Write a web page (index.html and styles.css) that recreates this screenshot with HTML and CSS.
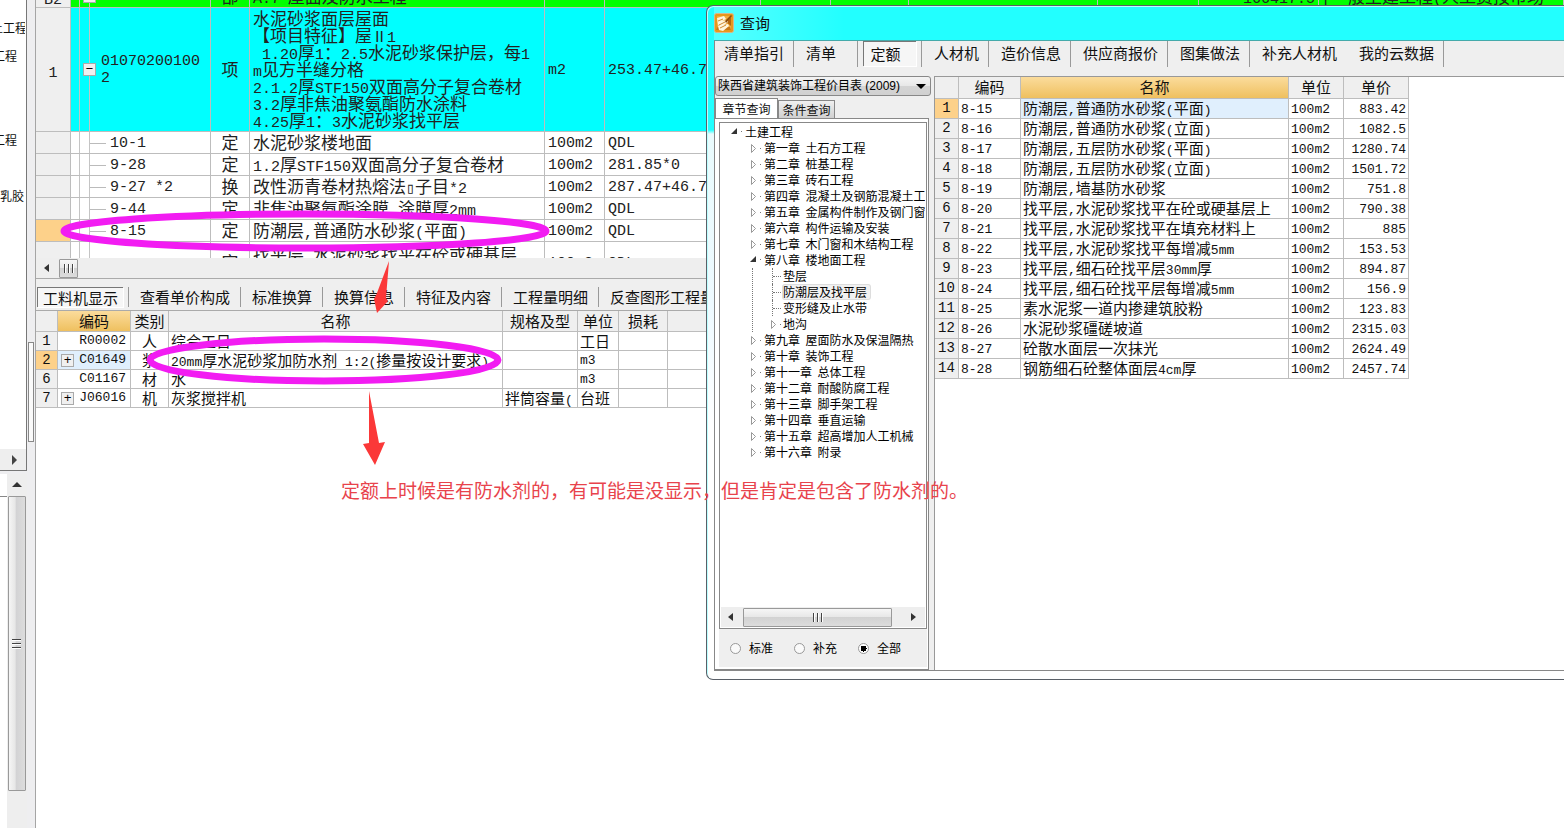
FILE: index.html
```
<!DOCTYPE html>
<html lang="zh-CN">
<head>
<meta charset="utf-8">
<title>查询</title>
<link rel="stylesheet" href="styles.css">
</head>
<body>
<div class="app">
  <aside class="side">
    <div class="side-top">
      <ul class="side-list">
        <li class="cut">土工程</li>
        <li class="cut">工程</li>
        <li></li>
        <li></li>
        <li class="cut">工程</li>
        <li></li>
        <li>乳胶</li>
      </ul>
      <div class="side-scroll"><svg width="6" height="10" viewBox="0 0 6 10"><path d="M1 0l5 5-5 5z" fill="#444"/></svg></div>
    </div>
    <div class="splitter"></div>
    <div class="side-bottom">
      <div class="side-sheet"></div>
      <div class="vscroll">
        <svg class="up" width="10" height="6" viewBox="0 0 10 6"><path d="M0 5l5-5 5 5z" fill="#333"/></svg>
        <div class="vthumb"><i></i><i></i><i></i></div>
      </div>
    </div>
  </aside>

  <main class="main">
    <div class="budget">
      <table class="grid budget-grid">
        <colgroup><col class="b1"><col class="b2"><col class="b3"><col class="b4"><col class="b5"><col class="b6"><col class="b7"><col class="b8"><col class="b9"><col class="b10"><col class="b11"><col></colgroup>
        <tbody>
        <tr class="section"><th><span class="n">B2</span></th><td class="code"><div class="item"><span class="box">−</span><span class="n">A.7</span></div></td><td class="kind">部</td><td><span class="n">A.7</span>&nbsp; 屋面及防水工程</td><td></td><td></td><td></td><td></td><td></td><td></td><td class="num"><span class="n">166417.5</span></td><td><span class="n">[</span>一般土建工程<span class="n">(</span>人工费按市场</td></tr>
        <tr class="bill"><th><span class="n">1</span></th><td class="code"><div class="item"><span class="box">−</span><span class="n">01070200100<br>2</span></div></td><td class="kind">项</td><td class="desc">水泥砂浆面层屋面<br>【项目特征】屋<span class="n">Ⅱ1</span><br><span class="n">&nbsp;1.20</span>厚<span class="n">1</span>：<span class="n">2.5</span>水泥砂浆保护层，每<span class="n">1</span><br><span class="n">m</span>见方半缝分格<br><span class="n">2.1.2</span>厚<span class="n">STF150</span>双面高分子复合卷材<br><span class="n">3.2</span>厚非焦油聚氨酯防水涂料<br><span class="n">4.25</span>厚<span class="n">1</span>：<span class="n">3</span>水泥砂浆找平层</td><td class="n">m2</td><td class="n">253.47+46.7</td><td></td><td></td><td></td><td></td><td></td><td></td></tr>
        <tr><th></th><td class="code"><div class="leaf n">10-1</div></td><td class="kind">定</td><td>水泥砂浆楼地面</td><td class="n">100m2</td><td class="n">QDL</td><td></td><td></td><td></td><td></td><td></td><td></td></tr>
        <tr><th></th><td class="code"><div class="leaf n">9-28</div></td><td class="kind">定</td><td><span class="n">1.2</span>厚<span class="n">STF150</span>双面高分子复合卷材</td><td class="n">100m2</td><td class="n">281.85*0</td><td></td><td></td><td></td><td></td><td></td><td></td></tr>
        <tr><th></th><td class="code"><div class="leaf n">9-27 *2</div></td><td class="kind">换</td><td>改性沥青卷材热熔法<span class="n">▯</span>子目<span class="n">*2</span></td><td class="n">100m2</td><td class="n">287.47+46.7</td><td></td><td></td><td></td><td></td><td></td><td></td></tr>
        <tr><th></th><td class="code"><div class="leaf n">9-44</div></td><td class="kind">定</td><td>非焦油聚氨酯涂膜<span class="n">&nbsp;</span>涂膜厚<span class="n">2mm</span></td><td class="n">100m2</td><td class="n">QDL</td><td></td><td></td><td></td><td></td><td></td><td></td></tr>
        <tr><th class="current"></th><td class="code"><div class="leaf n">8-15</div></td><td class="kind">定</td><td>防潮层<span class="n">,</span>普通防水砂浆<span class="n">(</span>平面<span class="n">)</span></td><td class="n">100m2</td><td class="n">QDL</td><td></td><td></td><td></td><td></td><td></td><td></td></tr>
        <tr class="double"><th></th><td class="code"></td><td class="kind">定</td><td>找平层<span class="n">,</span>水泥砂浆找平在砼或硬基层<br>上</td><td class="n">100m2</td><td class="n">QDL</td><td></td><td></td><td></td><td></td><td></td><td></td></tr>
        </tbody>
      </table>
    </div>
    <div class="hscroll budget-scroll">
      <svg width="5" height="8" viewBox="0 0 5 8"><path d="M5 0v8L0 4z" fill="#333"/></svg>
      <div class="hthumb"><i></i><i></i><i></i></div>
    </div>
    <nav class="detail-tabs">
      <button class="on">工料机显示</button><button>查看单价构成</button><button>标准换算</button><button>换算信息</button><button>特征及内容</button><button>工程量明细</button><button>反查图形工程量</button>
    </nav>
    <div class="detail">
      <table class="grid detail-grid">
        <colgroup><col class="d1"><col class="d2"><col class="d3"><col class="d4"><col class="d5"><col class="d6"><col class="d7"><col></colgroup>
        <thead><tr><th></th><th class="hot">编码</th><th>类别</th><th>名称</th><th>规格及型</th><th>单位</th><th>损耗</th><th></th></tr></thead>
        <tbody>
        <tr><th class="n">1</th><td><div class="res"><span class="n">R00002</span></div></td><td class="kind">人</td><td>综合工日</td><td></td><td>工日</td><td></td><td></td></tr>
        <tr><th class="n current">2</th><td class="picked"><div class="res"><span class="box">+</span><span class="n">C01649</span></div></td><td class="kind">浆</td><td><span class="n">20mm</span>厚水泥砂浆加防水剂<span class="n">&nbsp;1:2(</span>掺量按设计要求<span class="n">)</span></td><td></td><td class="n">m3</td><td></td><td></td></tr>
        <tr><th class="n">6</th><td><div class="res"><span class="n">C01167</span></div></td><td class="kind">材</td><td>水</td><td></td><td class="n">m3</td><td></td><td></td></tr>
        <tr><th class="n">7</th><td><div class="res"><span class="box">+</span><span class="n">J06016</span></div></td><td class="kind">机</td><td>灰浆搅拌机</td><td>拌筒容量<span class="n">(</span></td><td>台班</td><td></td><td></td></tr>
        </tbody>
      </table>
    </div>
  </main>
</div>

<section class="dialog" aria-label="查询">
  <header class="title">
    <svg width="20" height="20" viewBox="0 0 20 20"><rect x=".5" y=".5" width="19" height="19" rx="2" fill="#e8971c" stroke="#d9b88a"/><path d="M3 3h14v14H3z" fill="#f0ad3c"/><path d="M12 9l5-5v9z" fill="#b5670f"/><path d="M2 17l2-4 12 1 1 3z" fill="#c97a18"/><path d="M3 5l7-2 2 3-4 2 5-1 1 2-4 3 4-1 1 2-6 5-4-1-1-4 3-2-3 1z" fill="#fff6de"/><path d="M4 8l5-2M5 12l6-3M6 15l6-3" stroke="#d08a30" fill="none"/><path d="M11 8l6-6 1 1-6 7z" fill="#8f4c08"/></svg>
    <h1>查询</h1>
  </header>
  <div class="dialog-body">
    <nav class="query-tabs">
      <button>清单指引</button><button class="wide">清单</button><button class="on">定额</button><button>人材机</button><button>造价信息</button><button>供应商报价</button><button>图集做法</button><button class="open">补充人材机</button><button>我的云数据</button>
    </nav>
    <div class="panes">
      <div class="pane-left">
        <select class="book" aria-label="定额库"><option>陕西省建筑装饰工程价目表 (2009)</option></select>
        <div class="mode-tabs"><button class="on">章节查询</button><button>条件查询</button></div>
        <div class="tab-page">
          <div class="tree-box">
            <ul class="tree">
              <li class="root open">土建工程</li>
              <li>第一章&nbsp; 土石方工程</li>
              <li>第二章&nbsp; 桩基工程</li>
              <li>第三章&nbsp; 砖石工程</li>
              <li>第四章&nbsp; 混凝土及钢筋混凝土工</li>
              <li>第五章&nbsp; 金属构件制作及钢门窗</li>
              <li>第六章&nbsp; 构件运输及安装</li>
              <li>第七章&nbsp; 木门窗和木结构工程</li>
              <li class="open">第八章&nbsp; 楼地面工程
                <ul>
                  <li class="end">垫层</li>
                  <li class="end"><span class="chosen">防潮层及找平层</span></li>
                  <li class="end">变形缝及止水带</li>
                  <li>地沟</li>
                </ul>
              </li>
              <li>第九章&nbsp; 屋面防水及保温隔热</li>
              <li>第十章&nbsp; 装饰工程</li>
              <li>第十一章&nbsp; 总体工程</li>
              <li>第十二章&nbsp; 耐酸防腐工程</li>
              <li>第十三章&nbsp; 脚手架工程</li>
              <li>第十四章&nbsp; 垂直运输</li>
              <li>第十五章&nbsp; 超高增加人工机械</li>
              <li>第十六章&nbsp; 附录</li>
            </ul>
            <div class="hscroll tree-scroll">
              <svg width="5" height="8" viewBox="0 0 5 8"><path d="M5 0v8L0 4z" fill="#333"/></svg>
              <div class="hthumb"><i></i><i></i><i></i></div>
              <svg width="5" height="8" viewBox="0 0 5 8"><path d="M0 0v8l5-4z" fill="#333"/></svg>
            </div>
          </div>
          <div class="scope">
            <label><input type="radio" name="scope">标准</label>
            <label><input type="radio" name="scope">补充</label>
            <label><input type="radio" name="scope" checked>全部</label>
          </div>
        </div>
      </div>
      <div class="pane-right">
        <table class="grid quota">
          <colgroup><col class="q1"><col class="q2"><col class="q3"><col class="q4"><col class="q5"></colgroup>
          <thead><tr><th></th><th>编码</th><th class="hot">名称</th><th>单位</th><th>单价</th></tr></thead>
          <tbody>
          <tr><th class="n current">1</th><td class="n">8-15</td><td class="picked">防潮层<span class="n">,</span>普通防水砂浆<span class="n">(</span>平面<span class="n">)</span></td><td class="n">100m2</td><td class="n num">883.42</td></tr>
          <tr><th class="n">2</th><td class="n">8-16</td><td>防潮层<span class="n">,</span>普通防水砂浆<span class="n">(</span>立面<span class="n">)</span></td><td class="n">100m2</td><td class="n num">1082.5</td></tr>
          <tr><th class="n">3</th><td class="n">8-17</td><td>防潮层<span class="n">,</span>五层防水砂浆<span class="n">(</span>平面<span class="n">)</span></td><td class="n">100m2</td><td class="n num">1280.74</td></tr>
          <tr><th class="n">4</th><td class="n">8-18</td><td>防潮层<span class="n">,</span>五层防水砂浆<span class="n">(</span>立面<span class="n">)</span></td><td class="n">100m2</td><td class="n num">1501.72</td></tr>
          <tr><th class="n">5</th><td class="n">8-19</td><td>防潮层<span class="n">,</span>墙基防水砂浆</td><td class="n">100m2</td><td class="n num">751.8</td></tr>
          <tr><th class="n">6</th><td class="n">8-20</td><td>找平层<span class="n">,</span>水泥砂浆找平在砼或硬基层上</td><td class="n">100m2</td><td class="n num">790.38</td></tr>
          <tr><th class="n">7</th><td class="n">8-21</td><td>找平层<span class="n">,</span>水泥砂浆找平在填充材料上</td><td class="n">100m2</td><td class="n num">885</td></tr>
          <tr><th class="n">8</th><td class="n">8-22</td><td>找平层<span class="n">,</span>水泥砂浆找平每增减<span class="n">5mm</span></td><td class="n">100m2</td><td class="n num">153.53</td></tr>
          <tr><th class="n">9</th><td class="n">8-23</td><td>找平层<span class="n">,</span>细石砼找平层<span class="n">30mm</span>厚</td><td class="n">100m2</td><td class="n num">894.87</td></tr>
          <tr><th class="n">10</th><td class="n">8-24</td><td>找平层<span class="n">,</span>细石砼找平层每增减<span class="n">5mm</span></td><td class="n">100m2</td><td class="n num">156.9</td></tr>
          <tr><th class="n">11</th><td class="n">8-25</td><td>素水泥浆一道内掺建筑胶粉</td><td class="n">100m2</td><td class="n num">123.83</td></tr>
          <tr><th class="n">12</th><td class="n">8-26</td><td>水泥砂浆礓磋坡道</td><td class="n">100m2</td><td class="n num">2315.03</td></tr>
          <tr><th class="n">13</th><td class="n">8-27</td><td>砼散水面层一次抹光</td><td class="n">100m2</td><td class="n num">2624.49</td></tr>
          <tr><th class="n">14</th><td class="n">8-28</td><td>钢筋细石砼整体面层<span class="n">4cm</span>厚</td><td class="n">100m2</td><td class="n num">2457.74</td></tr>
          </tbody>
        </table>
      </div>
    </div>
  </div>
</section>

<svg class="marks" width="620" height="480" viewBox="0 0 620 480">
  <ellipse cx="305" cy="231" rx="241" ry="17" fill="none" stroke="#f21cf2" stroke-width="7"/>
  <ellipse cx="324" cy="360" rx="174" ry="21" fill="none" stroke="#f21cf2" stroke-width="7"/>
  <path d="M389 261L386 298L388 301L377 313L374 299L377 293Z" fill="#fb3838"/>
  <path d="M369 391L379 443L385 442L375 465L363 444L369 443Z" fill="#fb3838"/>
</svg>
<p class="remark">定额上时候是有防水剂的，有可能是没显示，但是肯定是包含了防水剂的。</p>
</body>
</html>
```
FILE: styles.css
```
* { box-sizing: border-box; }
html, body { height: 100%; margin: 0; }
body {
  font: 15px/18px "Noto Sans CJK SC", "Liberation Sans", sans-serif;
  color: #111;
  background: #fff;
  overflow: hidden;
  position: relative;
}
ul { list-style: none; margin: 0; padding: 0; }
h1, p { margin: 0; font-weight: normal; }
button { font: inherit; color: inherit; background: none; border: 0; padding: 0; white-space: nowrap; }
.n { font-family: "Liberation Mono", "Noto Sans CJK SC", monospace; font-size: 13px; }
span.n { line-height: 0; }

.app { display: flex; height: 100%; }

/* left strip */
.side {
  width: 36px;
  flex: none;
  display: grid;
  grid-template: 471px 1fr / 27px 1fr;
  background: #eeeef0;
  border-right: 1px solid #a5a5a5;
}
.side-top {
  display: flex;
  flex-direction: column;
  justify-content: space-between;
  overflow: hidden;
  background: #fff;
  border-right: 1px solid #777;
  border-bottom: 1px solid #777;
}
.side-list { padding-top: 14px; font-size: 12px; line-height: 28px; white-space: nowrap; width: 25px; overflow: hidden; }
.side-list li { height: 28px; }
.side-list .cut { text-indent: -7px; }
.side-list .cut:first-child { text-indent: -9px; }
.side-scroll { height: 21px; background: #eee; display: flex; align-items: center; justify-content: flex-end; padding-right: 9px; }
.splitter { align-self: end; width: 6px; height: 100px; margin: 0 0 29px 1px; border: 1px solid #888; background: #fafafa; }
.side-bottom { display: flex; padding-top: 3px; }
.side-sheet { width: 7px; background: linear-gradient(#fff 22px, #888 22px, #888 23px, #fff 23px); }
.vscroll { flex: 1; background: #eee; display: flex; flex-direction: column; align-items: center; padding: 8px 1px 37px 0; }
.vscroll .up { margin-bottom: 8px; flex: none; }
.vthumb {
  flex: 1; width: 18px; border: 1px solid #999; border-radius: 1px;
  background: linear-gradient(90deg, #f5f5f5, #e6e6e6 40%, #d2d2d4 42%, #dcdcdc);
  display: flex; flex-direction: column; align-items: center; justify-content: center; gap: 2px;
}
.vthumb i { width: 9px; height: 2px; border-top: 1px solid #444; background: #fff; }

/* grids */
.main { flex: 1; min-width: 0; display: flex; flex-direction: column; }
.grid { table-layout: fixed; border-collapse: separate; border-spacing: 0; }
.grid td, .grid th {
  border: 0 solid #bdbdbd; border-width: 0 1px 1px 0;
  padding: 0 2px; font-weight: normal; white-space: nowrap; overflow: hidden; text-align: left;
}
.grid th { background: #efefef; text-align: center; padding: 0; }
.grid th.current { background: #fdd18a; }
.grid th.hot { background: linear-gradient(#fbdc9c, #efc05f); }
.grid td.picked { background: #e0effd; }
.grid td.kind { text-align: center; padding: 0; }
.grid td.num { text-align: right; }
.box {
  flex: none; width: 13px; height: 13px; border: 1px solid #aaa; background: #f0f0f0; color: #000;
  font: 13px/11px "Liberation Mono", monospace; text-align: center;
}

.budget { height: 258px; overflow: hidden; flex: none; color: #222; font-size: 17px; line-height: 17px; }
.budget-grid { width: 100%; margin-top: -14px; }
.budget .n { font-size: 15px; }
.budget-grid tr { height: 22px; }
.budget-grid .bill { height: 124px; }
.budget-grid .double { height: 42px; }
.budget-grid td { padding: 0 3px; }
.budget-grid .section td { background: #0f0; }
.budget-grid .bill td { background-color: #0ff; }
.grid td.code {
  padding: 0;
  background-image: linear-gradient(90deg, transparent 8px, #c4c4c4 8px, #c4c4c4 9px, transparent 9px, transparent 18px, #c4c4c4 18px, #c4c4c4 19px, transparent 19px);
}
.item { display: flex; align-items: center; gap: 5px; padding-left: 12px; }
.item .n { line-height: 17px; }
.leaf { display: flex; align-items: center; gap: 4px; padding: 2px 0 0 19px; }
.leaf::before { content: ""; width: 16px; height: 1px; background: #bbb; }
.b1 { width: 35px; } .b2 { width: 140px; } .b3 { width: 39px; } .b4 { width: 295px; }
.b5 { width: 60px; } .b6 { width: 156px; } .b7 { width: 70px; } .b8 { width: 78px; }
.b9 { width: 189px; } .b10 { width: 101px; } .b11 { width: 120px; }

.hscroll { display: flex; align-items: center; background: #eee; }
.hthumb {
  height: 19px; border: 1px solid #999; border-radius: 1px;
  background: linear-gradient(#f6f6f6, #e8e8e8 45%, #d2d2d2 50%, #dcdcdc);
  display: flex; align-items: center; justify-content: center; gap: 2px;
}
.hthumb i { width: 2px; height: 9px; border-left: 1px solid #444; background: #fff; }
.budget-scroll { height: 21px; flex: none; padding-left: 8px; gap: 10px; border-bottom: 1px solid #aaa; }
.budget-scroll .hthumb { width: 19px; }

.detail-tabs { flex: none; height: 32px; padding: 8px 0 2px 1px; background: #efefef; display: flex; overflow: hidden; border-bottom: 1px solid #aaa; }
.detail-tabs button { height: 20px; padding: 0 10px 0 11px; border-left: 1px solid #999; }
.detail-tabs .on { width: 86px; padding: 0; margin-right: 5px; border: 1px solid #777; border-width: 1px 0 0 1px; box-shadow: 1px 1px 0 #fff; background: #f6f6f6; }
.detail-grid { width: 100%; line-height: 16px; }
.detail-grid tr { height: 19px; }
.detail-grid thead tr { height: 21px; }
.d1 { width: 22px; } .d2 { width: 73px; } .d3 { width: 38px; } .d4 { width: 334px; }
.d5 { width: 75px; } .d6 { width: 41px; } .d7 { width: 49px; }
.detail th.n { font-size: 14px; }
.res { display: flex; align-items: center; justify-content: flex-end; gap: 5px; padding-right: 2px; }
.res .n { line-height: 18px; }

/* query window */
.dialog {
  position: absolute; left: 706px; right: 0; top: 5px; height: 675px;
  display: flex; flex-direction: column;
  padding: 0 0 8px 7px;
  border: 1px solid #5a6068; border-right: 0; border-radius: 7px 0 0 7px;
  background: linear-gradient(#2ff 0, #2ff 124px, #e9fbfd 128px, #eefaff 300px, #fff 420px);
  box-shadow: inset 1px 1px 0 #bff;
}
.title { height: 34px; display: flex; align-items: center; gap: 6px; background: linear-gradient(90deg, rgba(210, 255, 255, .3), transparent 130px); }
.title h1 { font-size: 15px; }
.dialog-body { flex: 1; min-height: 0; display: flex; flex-direction: column; background: #efefef; border: 1px solid #888; border-right: 0; border-top-color: #4aa; }
.query-tabs { height: 35px; display: flex; align-items: flex-start; }
.query-tabs button { height: 26px; padding: 0 9px 2px; border-right: 1px solid #999; }
.query-tabs button + button { padding-left: 12px; }
.query-tabs button.wide { padding-right: 21px; }
.query-tabs .wide + .on { width: 53px; height: 25px; margin: 0 5px; padding: 0 15px 0 6px; border: 1px solid #777; border-width: 1px 0 0 1px; box-shadow: 1px 1px 0 #fff; background: #f6f6f6; }
.query-tabs .on + button { border-left: 1px solid #999; }
.query-tabs button.open { border-right-color: transparent; }
.panes { flex: 1; min-height: 0; display: flex; }
.pane-left { width: 216px; flex: none; display: flex; flex-direction: column; font-size: 12px; }
.book {
  appearance: none; width: 100%; height: 20px; margin-bottom: 2px; padding: 0 2px; border: 1px solid #888; border-radius: 3px; color: #000;
  font: 12px "Liberation Sans", "Noto Sans CJK SC", sans-serif;
  background: url("data:image/svg+xml,%3Csvg xmlns='http://www.w3.org/2000/svg' width='10' height='5'%3E%3Cpath d='M0 0h10L5 5z'/%3E%3C/svg%3E") right 4px center no-repeat, linear-gradient(#f4f4f4, #e8e8e8 48%, #d4d4d4 52%, #d0d0d0);
}
.mode-tabs { display: flex; align-items: flex-end; }
.mode-tabs button { width: 57px; height: 18px; border: 1px solid #888; border-bottom: 0; background: linear-gradient(#f0f0f0, #d0d0d0); }
.mode-tabs .on { width: 63px; height: 20px; background: #fff; }
.tab-page { flex: 1; min-height: 0; width: 214px; padding: 3px 1px 2px 4px; background: #fff; border: 1px solid #888; border-left-width: 0; display: flex; flex-direction: column; }
.tree-box { flex: 1; min-height: 0; display: flex; flex-direction: column; justify-content: space-between; border: 1px solid #888; background: #fff; overflow: hidden; padding: 1px; }
.tree { line-height: 16px; white-space: nowrap; color: #000; overflow: hidden; }
.tree li { padding-left: 43px; background: url("data:image/svg+xml,%3Csvg xmlns='http://www.w3.org/2000/svg' width='12' height='9'%3E%3Cpath d='M.5 .5v8l4-4z' fill='white' stroke='%23999'/%3E%3Cpath d='M9 4h1v1h-1z' fill='%23777'/%3E%3C/svg%3E") 30px 4px no-repeat; }
.tree li.open { background-image: url("data:image/svg+xml,%3Csvg xmlns='http://www.w3.org/2000/svg' width='12' height='9'%3E%3Cpath d='M0 7h6V1z' fill='%23333'/%3E%3Cpath d='M10 4h1v1h-1z' fill='%23777'/%3E%3C/svg%3E"); background-position: 29px 3px; }
.tree li.root { padding-left: 24px; background-position: 10px 3px; }
.tree ul { margin-left: -12px; border-left: 1px dotted #777; }
.tree ul li { padding-left: 30px; background-position: 18px 4px; }
.tree ul li.end { background: none; position: relative; }
.tree li.end::before { content: ""; position: absolute; left: 19px; top: 0; width: 9px; height: 16px; border-left: 1px dotted #777; }
.tree li.end::after { content: ""; position: absolute; left: 20px; top: 8px; width: 8px; border-top: 1px dotted #777; }
.chosen { background: #f1f1f1; box-shadow: 0 0 0 1px #ddd; border-radius: 2px; display: inline-block; line-height: 14px; padding-right: 3px; }
.tree-scroll { height: 20px; flex: none; padding: 0 9px 0 7px; justify-content: space-between; }
.tree-scroll .hthumb { width: 149px; margin-right: 9px; }
.scope { height: 38px; flex: none; display: flex; align-items: center; gap: 21px; padding-left: 11px; background: #efefef; color: #000; }
.scope label { display: flex; align-items: center; gap: 8px; line-height: 16px; }
.scope input { appearance: none; width: 11px; height: 11px; margin: 0; border: 1px solid #999; border-radius: 50%; background: #fafafa; }
.scope input:checked { background: radial-gradient(#000 3px, #fff 3px); }
.pane-right { flex: 1; margin-left: 3px; background: #fff; border: 1px solid #999; border-width: 1px 0 0 1px; }
.quota { width: 474px; line-height: 17px; }
.quota tr { height: 20px; }
.quota thead tr { height: 22px; }
.q1 { width: 24px; } .q2 { width: 62px; } .q3 { width: 268px; } .q4 { width: 55px; } .q5 { width: 65px; }
.quota tbody th.n { font-size: 14px; }

/* CJK glyphs sit low in their line and Latin ones high, so even them out inside a cell */
.quota td:not(.n), .budget-grid td:not(.n):not(.code) { padding-bottom: 2px; }
.quota thead th { padding-bottom: 2px; }
.quota td.n { padding-top: 1px; }
.budget-grid td.n, .detail-grid td.n { padding-top: 2px; }

/* annotations */
.marks { position: absolute; left: 0; top: 0; pointer-events: none; }
.remark { position: absolute; left: 341px; top: 478px; font-size: 19px; line-height: 24px; color: #e8434c; white-space: nowrap; }
```
